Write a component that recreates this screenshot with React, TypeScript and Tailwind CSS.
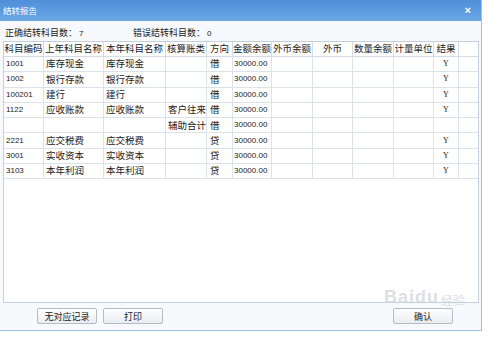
import React from "react";

// column widths of the report grid
const cols = [
  { title: "科目编码", w: 40 },
  { title: "上年科目名称", w: 60 },
  { title: "本年科目名称", w: 62 },
  { title: "核算账类", w: 41 },
  { title: "方向", w: 26 },
  { title: "金额余额", w: 39 },
  { title: "外币余额", w: 41 },
  { title: "外币", w: 40 },
  { title: "数量余额", w: 41 },
  { title: "计量单位", w: 40 },
  { title: "结果", w: 25 },
];

const rows = [
  ["1001", "库存现金", "库存现金", "", "借", "30000.00", "Y"],
  ["1002", "银行存款", "银行存款", "", "借", "30000.00", "Y"],
  ["100201", "建行", "建行", "", "借", "30000.00", "Y"],
  ["1122", "应收账款", "应收账款", "客户往来", "借", "30000.00", "Y"],
  ["", "", "", "辅助合计", "借", "30000.00", ""],
  ["2221", "应交税费", "应交税费", "", "贷", "30000.00", "Y"],
  ["3001", "实收资本", "实收资本", "", "贷", "30000.00", "Y"],
  ["3103", "本年利润", "本年利润", "", "贷", "30000.00", "Y"],
];

const cjk = "font-['Noto_Sans_CJK_SC','Noto_Sans',sans-serif]";

function Btn({ label, className }: { label: string; className?: string }) {
  return (
    <button
      className={`h-[16px] w-[60px] rounded-[2px] border border-[#b4bcc6] bg-gradient-to-b from-white to-[#e9edf1] text-[9px] leading-none text-[#222] ${cjk} ${className ?? ""}`}
    >
      {label}
    </button>
  );
}

export default function App() {
  return (
    <div className="relative h-[337px] w-[500px] overflow-hidden bg-white">
      <div className="flex h-[331px] w-[482px] flex-col border-b border-r border-[#9fc0e6] bg-[#f7f9fc]">
        {/* title bar */}
        <div className="flex h-[21px] shrink-0 items-center justify-between bg-gradient-to-b from-[#4f8fd9] to-[#6aa7e6] pl-[3px] pr-[10px]">
          <span className={`text-[8.5px] leading-none text-white ${cjk}`}>结转报告</span>
          <span className="font-['Liberation_Sans',sans-serif] text-[11px] font-bold leading-none text-white">×</span>
        </div>

        {/* counts */}
        <div className={`flex h-[20px] shrink-0 items-center pt-[4px] text-[9px] leading-none text-[#222] ${cjk}`}>
          <span className="w-[133px] pl-[5px]">
            正确结转科目数：&nbsp;<span className="font-['Liberation_Sans',sans-serif] text-[8px]">7</span>
          </span>
          <span>
            错误结转科目数：&nbsp;<span className="font-['Liberation_Sans',sans-serif] text-[8px]">0</span>
          </span>
        </div>

        {/* grid */}
        <div className="ml-[3px] h-[262px] w-[476px] shrink-0 border border-[#c3cfdc] bg-white">
          <div className={`flex h-[15px] border-b border-[#d3dbe4] text-[9.5px] leading-none text-[#222] ${cjk}`}>
            {cols.map((c) => (
              <div
                key={c.title}
                style={{ width: c.w }}
                className="flex shrink-0 items-center justify-center overflow-hidden whitespace-nowrap border-r border-[#d3dbe4]"
              >
                {c.title}
              </div>
            ))}
          </div>
          {rows.map((r, i) => (
            <div key={i} className="flex h-[15.3px] border-b border-[#dbe2ea] text-[#222]">
              {cols.map((c, j) => {
                let txt = "";
                let cls = `pl-[2px] text-[9.5px] ${cjk}`;
                if (j === 0) {
                  txt = r[0];
                  cls = "pl-[2px] text-[8px] font-['Liberation_Sans',sans-serif]";
                } else if (j === 1) txt = r[1];
                else if (j === 2) txt = r[2];
                else if (j === 3) txt = r[3];
                else if (j === 4) {
                  txt = r[4];
                  cls = `pl-[3px] text-[9.5px] ${cjk}`;
                } else if (j === 5) {
                  txt = r[5];
                  cls = "pl-[1px] text-[8px] font-['Liberation_Sans',sans-serif]";
                } else if (j === 10) {
                  txt = r[6];
                  cls = "justify-center text-[8px] font-['Liberation_Serif',serif]";
                }
                return (
                  <div
                    key={j}
                    style={{ width: c.w }}
                    className={`flex shrink-0 items-center overflow-hidden whitespace-nowrap border-r border-[#dbe2ea] leading-none ${cls}`}
                  >
                    {txt}
                  </div>
                );
              })}
            </div>
          ))}
        </div>

        {/* buttons */}
        <div className="flex items-start pt-[5px]">
          <Btn label="无对应记录" className="ml-[37px]" />
          <Btn label="打印" className="ml-[6px]" />
          <Btn label="确认" className="ml-[230px]" />
        </div>
      </div>

      {/* watermark */}
      <div className="pointer-events-none absolute left-[384px] top-[288px] flex items-end gap-[2px] text-[#cfd3d8] opacity-70">
        <span className="font-['Liberation_Sans',sans-serif] text-[18px] font-bold leading-none tracking-[1px]">Baidu</span>
        <span className={`text-[12px] leading-none ${cjk}`}>经验</span>
      </div>
    </div>
  );
}
